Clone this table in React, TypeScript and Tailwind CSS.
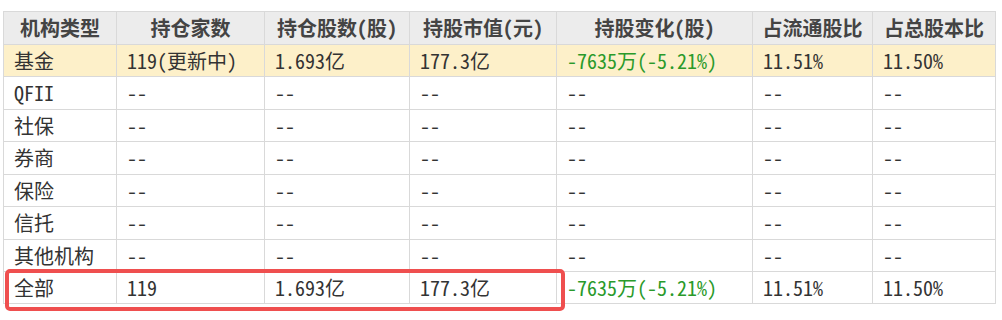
const columns = [
  { title: "机构类型", w: "w-[113px]" },
  { title: "持仓家数", w: "w-[148px]" },
  { title: "持仓股数(股)", w: "w-[145px]" },
  { title: "持股市值(元)", w: "w-[147px]" },
  { title: "持股变化(股)", w: "w-[196px]" },
  { title: "占流通股比", w: "w-[120px]" },
  { title: "占总股本比", w: "w-[123px]" },
];

type Row = { cells: string[]; h: string; highlight?: boolean };

const dash = ["--", "--", "--", "--", "--", "--"];

const rows: Row[] = [
  {
    cells: ["基金", "119(更新中)", "1.693亿", "177.3亿", "-7635万(-5.21%)", "11.51%", "11.50%"],
    h: "h-[32px]",
    highlight: true,
  },
  { cells: ["QFII", ...dash], h: "h-[33px]" },
  { cells: ["社保", ...dash], h: "h-[32px]" },
  { cells: ["券商", ...dash], h: "h-[33px]" },
  { cells: ["保险", ...dash], h: "h-[32px]" },
  { cells: ["信托", ...dash], h: "h-[33px]" },
  { cells: ["其他机构", ...dash], h: "h-[32px]" },
  {
    cells: ["全部", "119", "1.693亿", "177.3亿", "-7635万(-5.21%)", "11.51%", "11.50%"],
    h: "h-[32px]",
  },
];

export default function App() {
  return (
    <div
      className="w-[1002px] h-[320px] bg-white pt-[11px] pl-[3px] text-[#333] text-[20px]"
      style={{ fontFamily: '"Noto Sans Mono CJK SC", "Noto Sans CJK SC", monospace' }}
    >
      <div className="relative w-fit border-t border-l border-[#d9d9d9]">
        {/* header */}
        <div className="flex h-[33px] bg-[#ececec]">
          {columns.map((c) => (
            <div
              key={c.title}
              className={`${c.w} shrink-0 border-r border-b border-[#d9d9d9] flex items-center justify-center font-bold text-[#444] whitespace-nowrap`}
            >
              {c.title}
            </div>
          ))}
        </div>
        {rows.map((r, i) => (
          <div key={i} className={`flex ${r.h} ${r.highlight ? "bg-[#fdf0c9]" : "bg-white"}`}>
            {r.cells.map((cell, j) => (
              <div
                key={j}
                className={`${columns[j].w} shrink-0 border-r border-b border-[#d9d9d9] flex items-center pl-[10px] whitespace-nowrap ${
                  j === 4 && cell !== "--" ? "text-[#2a9a2a]" : ""
                }`}
              >
                {cell}
              </div>
            ))}
          </div>
        ))}
        {/* highlight annotation */}
        <div className="absolute left-[1px] top-[257px] w-[560px] h-[42px] border-[4px] border-[#ef4f4f] rounded-[5px]" />
      </div>
    </div>
  );
}
